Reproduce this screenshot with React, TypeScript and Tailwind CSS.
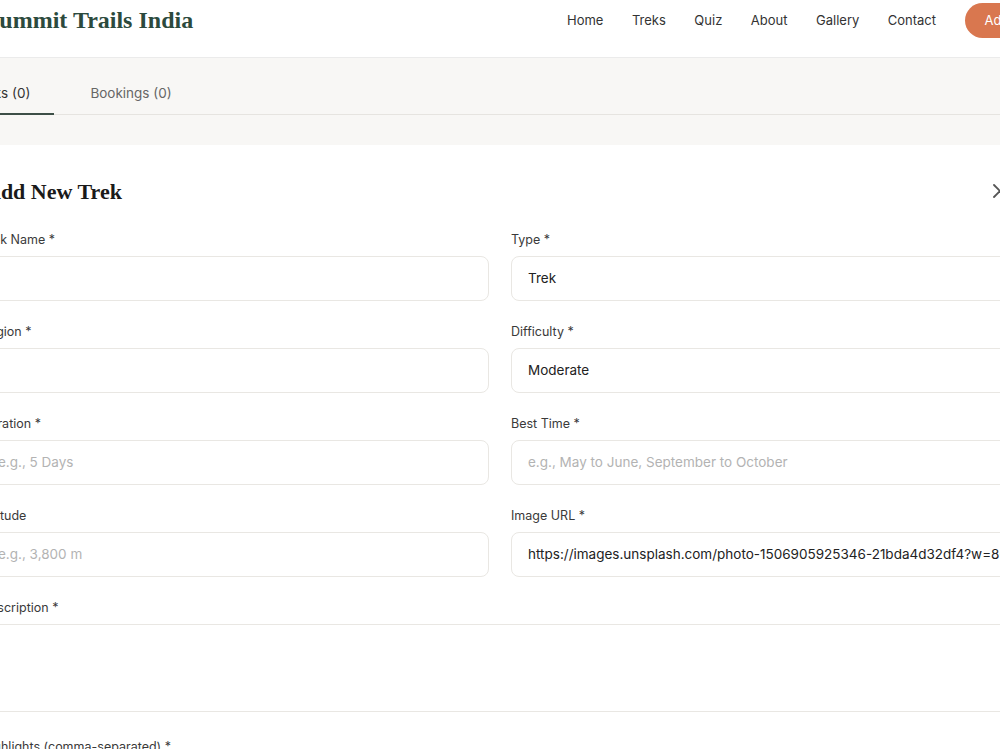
import { X } from "lucide-react";

const NAV = ["Home", "Treks", "Quiz", "About", "Gallery", "Contact"];

const FIELDS = [
  { label: "Trek Name *", value: "", placeholder: "" },
  { label: "Type *", value: "Trek", placeholder: "" },
  { label: "Region *", value: "", placeholder: "" },
  { label: "Difficulty *", value: "Moderate", placeholder: "" },
  { label: "Duration *", value: "", placeholder: "e.g., 5 Days" },
  { label: "Best Time *", value: "", placeholder: "e.g., May to June, September to October" },
  { label: "Altitude", value: "", placeholder: "e.g., 3,800 m" },
  {
    label: "Image URL *",
    value: "https://images.unsplash.com/photo-1506905925346-21bda4d32df4?w=800",
    placeholder: "",
  },
];

const sans = "font-['Inter','Noto_Sans',sans-serif]";
const serif = "font-['Liberation_Serif','Times_New_Roman',serif]";

function Field({ label, value, placeholder }: { label: string; value: string; placeholder: string }) {
  return (
    <div className="flex flex-col">
      <label className="text-[12.5px] leading-5 pt-px text-[#3a3a3a] mb-[6px]">{label}</label>
      <div className="h-[45px] rounded-lg border border-[#e9e7e3] bg-white flex items-center px-4 overflow-hidden whitespace-nowrap">
        {value ? (
          <span className="text-[13.5px] text-[#222]">{value}</span>
        ) : (
          <span className="text-[13.5px] text-[#b3b3b3]">{placeholder}</span>
        )}
      </div>
    </div>
  );
}

export default function App() {
  return (
    <div className={`w-[1000px] h-[749px] overflow-hidden bg-white ${sans}`}>
      <div className="ml-[-60px] w-[1120px]">
        {/* Header */}
        <header className="h-[58px] border-b border-[#ebebeb] pt-[3px] bg-white">
          <div className="h-[35px] flex items-center">
            <div className="w-[627px] pl-[46px]">
              <span className={`${serif} text-[24px] font-bold text-[#2c4a3d] leading-none`}>
                Summit Trails India
              </span>
            </div>
            <nav className="flex items-center gap-[28.5px] text-[13px] text-[#333]">
              {NAV.map((n) => (
                <a key={n} href="#">
                  {n}
                </a>
              ))}
              <button className="h-[35px] px-5 rounded-full bg-[#d9774f] text-white text-[13px]">
                Admin
              </button>
            </nav>
          </div>
        </header>

        {/* Tabs */}
        <div className="bg-[#f8f7f5] h-[87px] pt-[11px]">
          <div className="flex gap-3 pl-[9px] border-b border-[#e6e4e0]">
            <button className="px-6 pt-[14px] pb-[10px] text-[13.5px] leading-5 text-[#333] border-b-2 border-[#3d4f47] -mb-px">
              Treks (0)
            </button>
            <button className="px-6 pt-[14px] pb-[10px] text-[13.5px] leading-5 text-[#666] border-b-2 border-transparent -mb-px">
              Bookings (0)
            </button>
          </div>
        </div>

        {/* Form card */}
        <div className="bg-white px-[41px] pt-8">
          <div className="flex items-center justify-between h-7 mb-6">
            <h2 className={`${serif} text-[22px] font-bold text-[#1a1a1a] ml-[4px]`}>Add New Trek</h2>
            <X size={24} strokeWidth={1.8} className="text-[#555] mr-[7px]" />
          </div>

          <div className="grid grid-cols-2 gap-x-[22px] gap-y-5">
            {FIELDS.map((f) => (
              <Field key={f.label} {...f} />
            ))}
          </div>

          <div className="flex flex-col mt-5">
            <label className="text-[12.5px] leading-5 pt-px text-[#3a3a3a] mb-[6px]">Description *</label>
            <div className="h-[88px] rounded-lg border border-[#e9e7e3]" />
          </div>

          <div className="flex flex-col mt-6">
            <label className="text-[12.5px] leading-5 pt-px text-[#3a3a3a] mb-[6px]">
              Highlights (comma-separated) *
            </label>
            <div className="h-[45px] rounded-lg border border-[#e9e7e3]" />
          </div>
        </div>
      </div>
    </div>
  );
}
